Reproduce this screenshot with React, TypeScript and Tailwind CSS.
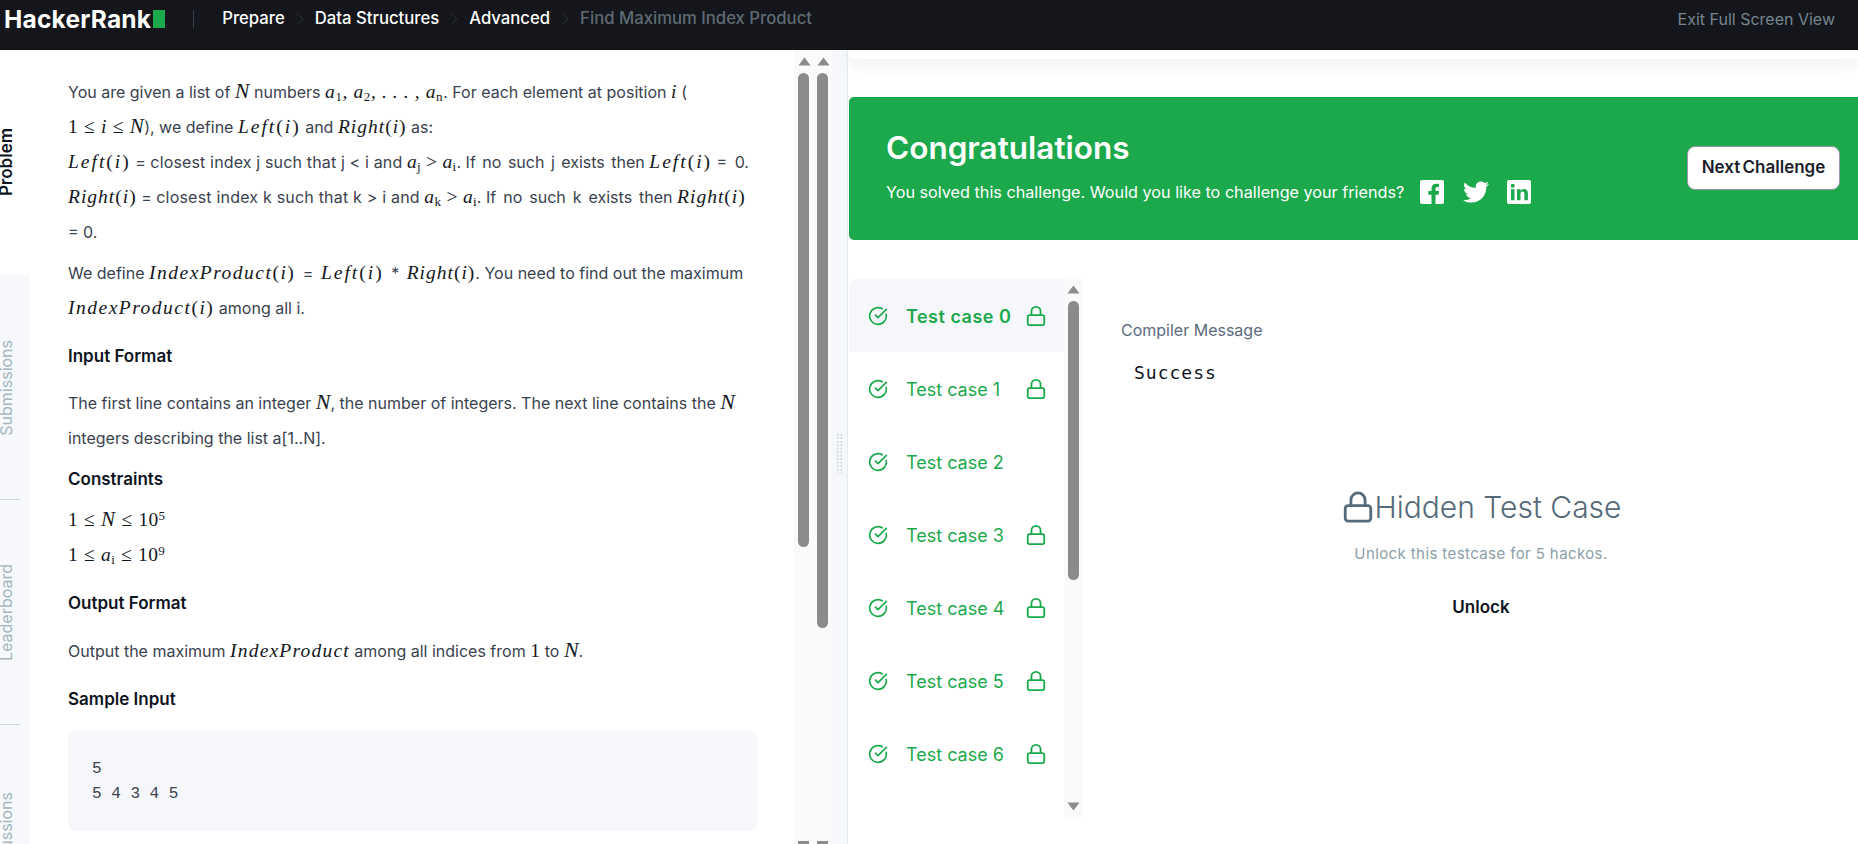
import React from "react";
import { CircleCheckBig, Lock } from "lucide-react";
import { FaTwitter } from "react-icons/fa";

const M = ({ children, className = "tracking-[0.3px]" }: { children: React.ReactNode; className?: string }) => (
  <span className={`font-['Liberation_Serif'] italic text-[19.5px] leading-none text-[#14171c] ${className}`}>{children}</span>
);
const R = ({ children }: { children: React.ReactNode }) => <span className="not-italic">{children}</span>;
const N = () => <M className="text-[22px]">N</M>;
const Le = () => <span className="not-italic mx-[6px]">≤</span>;
const Left = () => (
  <M className="tracking-[2px]">
    Left<R>(</R>i<R>)</R>
  </M>
);
const Right = () => (
  <M className="tracking-[1px]">
    Right<R>(</R>i<R>)</R>
  </M>
);
const Index = () => (
  <M className="tracking-[1.5px]">
    IndexProduct<R>(</R>i<R>)</R>
  </M>
);
const Sp = ({ children }: { children: React.ReactNode }) => <span className="[word-spacing:3px]">{children}</span>;
const Sub = ({ children }: { children: React.ReactNode }) => <sub className="text-[13px] not-italic">{children}</sub>;
const Sup = ({ children }: { children: React.ReactNode }) => <sup className="text-[13px] not-italic">{children}</sup>;
const H = ({ children, className }: { children: React.ReactNode; className: string }) => (
  <h4 className={`text-[17px] leading-[24px] font-semibold text-[#0e141e] ${className}`}>{children}</h4>
);

const Tab = ({ label, active }: { label: string; active?: boolean }) => (
  <div className={`h-[225px] shrink-0 flex items-center relative ${active ? "bg-white" : "bg-[#f7f8fb]"}`}>
    <span
      className={`[writing-mode:vertical-rl] rotate-180 -ml-[6px] leading-[24px] whitespace-nowrap ${active ? "text-[17px] font-semibold text-[#0e141e]" : "text-[16px] text-[#a3b7bf]"}`}
    >
      {label}
    </span>
    {!active && <div className="absolute left-0 bottom-0 w-[20px] h-px bg-[#c9d6db]" />}
  </div>
);

const Up = ({ className = "" }: { className?: string }) => (
  <svg width="13" height="9" viewBox="0 0 13 9" className={`block ${className}`}>
    <path d="M6.5 0.5 L12.6 8.5 H0.4 Z" fill="#8b8b8b" />
  </svg>
);

const Crumb = () => (
  <svg width="8" height="14" viewBox="0 0 8 14" className="mx-[11px] shrink-0">
    <path d="M1 1l6 6-6 6" fill="none" stroke="#2c3036" strokeWidth="1" />
  </svg>
);

const Fb = () => (
  <svg width="24" height="24" viewBox="0 0 24 24" className="ml-[16px] shrink-0" fill="currentColor">
    <path
      fillRule="evenodd"
      d="M2 0h20a2 2 0 012 2v20a2 2 0 01-2 2h-6.500v-9.300h3.100l.5-3.600h-3.600V8.800c0-1 .3-1.800 1.800-1.800H19V3.800c-.3 0-1.500-.1-2.800-.1-2.800 0-4.700 1.700-4.700 4.800v2.600H8.300v3.600h3.200V24H2a2 2 0 01-2-2V2a2 2 0 012-2z"
    />
  </svg>
);
const In = () => (
  <svg width="24" height="24" viewBox="0 0 24 24" className="ml-[18px] shrink-0" fill="currentColor">
    <path
      fillRule="evenodd"
      d="M2 0h20a2 2 0 012 2v20a2 2 0 01-2 2H2a2 2 0 01-2-2V2a2 2 0 012-2z M4 9.300v11h3.500v-11z M5.750 3.800a2 2 0 100 4 2 2 0 000-4z M10 9.300v11h3.500v-6c0-1.600.6-2.700 2-2.700s1.900 1 1.900 2.700v6h3.500v-6.700c0-3-1.500-4.600-3.800-4.600-1.700 0-2.900.9-3.600 2V9.300z"
    />
  </svg>
);

const cases = [0, 1, 2, 3, 4, 5, 6];

export default function App() {
  return (
    <div className="h-[844px] w-[1858px] overflow-hidden bg-white font-['Inter'] flex flex-col text-[#39424e]">
      <header className="h-[50px] shrink-0 bg-[#14161b] flex items-center pb-[12px] text-[16.7px] text-white">
        <span className="ml-[4px] text-[24.5px] font-bold leading-none tracking-[0.2px]">HackerRank</span>
        <span className="ml-[2px] w-[12px] h-[18px] bg-[#1ba94c]" />
        <span className="ml-[28px] mr-[28px] w-px h-[18px] bg-[#3a4048]" />
        <span className="font-medium">Prepare</span>
        <Crumb />
        <span className="font-medium">Data Structures</span>
        <Crumb />
        <span className="font-medium">Advanced</span>
        <Crumb />
        <span className="font-medium text-[#5f6b73]">Find Maximum Index Product</span>
        <span className="ml-auto mr-[23px] text-[16px] text-[#76868e]">Exit Full Screen View</span>
      </header>

      <div className="flex flex-1 min-h-0">
        <nav className="w-[30px] shrink-0 overflow-hidden flex flex-col">
          <Tab label="Problem" active />
          <Tab label="Submissions" />
          <Tab label="Leaderboard" />
          <Tab label="Discussions" />
        </nav>

        <main className="w-[764px] shrink-0 overflow-hidden pl-[38px] pt-[25px] text-[16px] leading-[35px] text-[#39424e]">
          <p className="whitespace-nowrap">
            You are given a list of <N /> numbers <M className="tracking-[0.6px]">a<Sub>1</Sub>, a<Sub>2</Sub>, . . . , a<Sub>n</Sub></M>.{" "}
            For each element at position <M>i</M> (
            <br />
            <M><R>1</R><Le />i<Le /><span className="text-[21px]">N</span></M>), we define <Left /> and <Right /> as:
            <br />
            <Left /> <Sp>=</Sp> <span className="tracking-[0.15px]">closest index j such that j &lt; i and</span>{" "}
            <M>a<Sub>j</Sub><R> &gt; </R>a<Sub>i</Sub></M>. <span className="[word-spacing:2px]">If no such j exists then</span> <Left /> <Sp>= 0.</Sp>
            <br />
            <Right /> <Sp>=</Sp> <span className="tracking-[0.2px]">closest index k such that k &gt; i and</span>{" "}
            <M>a<Sub>k</Sub><R> &gt; </R>a<Sub>i</Sub></M>. <span className="[word-spacing:2.5px]">If no such k exists then</span> <Right />
            <br />= 0.
          </p>
          <p className="mt-[6px] whitespace-nowrap">
            We define <Index /><Sp> = </Sp><Left /><Sp> * </Sp><Right />. You need to find out the maximum
            <br />
            <Index /> among all i.
          </p>
          <H className="mt-[18px]">Input Format</H>
          <p className="mt-[18px] whitespace-nowrap">
            The first line contains an integer <N />, the number of integers. The next line contains the <N />
            <br />
            integers describing the list a[1..N].
          </p>
          <H className="mt-[11px]">Constraints</H>
          <p className="mt-[12px] whitespace-nowrap">
            <M><R>1</R><Le /><span className="text-[21px]">N</span><Le /><R>10</R><Sup>5</Sup></M>
            <br />
            <M><R>1</R><Le />a<Sub>i</Sub><Le /><R>10</R><Sup>9</Sup></M>
          </p>
          <H className="mt-[18px]">Output Format</H>
          <p className="mt-[19px] whitespace-nowrap">
            Output the maximum <M className="tracking-[1.2px]">IndexProduct</M> among all indices from <M><R>1</R></M> to <N />.
          </p>
          <H className="mt-[18px]">Sample Input</H>
          <pre className="mt-[20px] w-[689px] h-[100px] rounded-lg bg-[#f6f7fb] pl-[24px] pt-[26px] font-['Liberation_Mono'] text-[16px] leading-[25px] text-[#39424e]">
            {"5\n5 4 3 4 5"}
          </pre>
        </main>

        <div className="w-[19px] shrink-0 bg-[#fafafa] pl-[4px] pt-[7px] flex flex-col items-start">
          <Up />
          <div className="mt-[7px] w-[11px] h-[474px] rounded-full bg-[#8b8b8b]" />
          <div className="mt-auto w-[11px] h-[3px] bg-[#8b8b8b]" />
        </div>
        <div className="w-[19px] shrink-0 bg-[#fafafa] pl-[4px] pt-[7px] flex flex-col items-start">
          <Up />
          <div className="mt-[7px] w-[11px] h-[555px] rounded-full bg-[#8b8b8b]" />
          <div className="mt-auto w-[11px] h-[3px] bg-[#8b8b8b]" />
        </div>

        <div className="w-[16px] shrink-0 bg-[#f6f7fb] border-r border-[#e9ebf2] pl-[4px] pt-[383px]">
          <div className="w-[7px] h-[40px] bg-[radial-gradient(circle,#d0d4da_1px,transparent_1.2px)] bg-[length:3.5px_3.5px]" />
        </div>

        <section className="flex-1 min-w-0 flex flex-col">
          <div className="h-[9px] shrink-0 bg-white rounded-bl-lg shadow-[0_6px_14px_rgba(0,0,0,0.08)]" />
          <div className="mt-[38px] h-[143px] shrink-0 bg-[#1ba94c] rounded-l-[5px] ml-px flex items-center text-white">
            <div className="ml-[37px] pb-[4px] flex flex-col">
              <h2 className="text-[31.5px] leading-[40px] font-semibold">Congratulations</h2>
              <div className="mt-[11px] flex items-center text-[16.2px]">
                <span>You solved this challenge. Would you like to challenge your friends?</span>
                <Fb />
                <FaTwitter className="ml-[19px] shrink-0" size={26} />
                <In />
              </div>
            </div>
            <button className="ml-auto mr-[18px] mb-[2px] w-[153px] h-[44px] rounded-lg bg-white border border-[#9a97ad] text-[17px] font-semibold text-[#1b1d2a] [word-spacing:-2px]">
              Next Challenge
            </button>
          </div>

          <div className="mt-[39px] flex flex-1 min-h-0">
            <div className="ml-px w-[215px] shrink-0 flex flex-col">
              {cases.map((c) => (
                <div
                  key={c}
                  className={`h-[73px] shrink-0 flex items-center pl-[19px] text-[18px] text-[#1ba94c] ${c === 0 ? "bg-[#f6f7fb] rounded-tl-lg" : ""}`}
                >
                  <CircleCheckBig size={20} strokeWidth={2} />
                  <span className={`ml-[18px] pt-[2px] whitespace-nowrap ${c === 0 ? "font-semibold tracking-[0.5px]" : ""}`}>Test case {c}</span>
                  {c !== 2 && <Lock className="ml-auto mr-[17px]" size={22} strokeWidth={2} />}
                </div>
              ))}
            </div>
            <div className="w-[19px] h-[538px] shrink-0 bg-[#fafafa] pl-[3px] pt-[6px] flex flex-col items-start">
              <Up />
              <div className="mt-[7px] ml-[1px] w-[11px] h-[279px] rounded-full bg-[#8b8b8b]" />
              <Up className="mt-auto mb-[6px] rotate-180" />
            </div>

            <div className="flex-1 min-w-0 pl-[38px] pt-[40px]">
              <div className="text-[16px] leading-[22px] text-[#5b6b7d]">Compiler Message</div>
              <div className="mt-[21px] ml-[13px] font-['DejaVu_Sans_Mono'] text-[18px] leading-[22px] tracking-[1px] text-[#0e141e]">Success</div>
              <div className="mt-[103px] w-[720px] flex flex-col items-center">
                <div className="flex items-center text-[#566a7a]">
                  <Lock size={34} strokeWidth={2} />
                  <span className="text-[30px] leading-[40px] font-light">Hidden Test Case</span>
                </div>
                <div className="mt-[16px] text-[15px] tracking-[0.4px] leading-[22px] text-[#8d9ea9]">Unlock this testcase for 5 hackos.</div>
                <div className="mt-[31px] text-[17px] leading-[22px] font-semibold text-[#0e141e]">Unlock</div>
              </div>
            </div>
          </div>
        </section>
      </div>
    </div>
  );
}
